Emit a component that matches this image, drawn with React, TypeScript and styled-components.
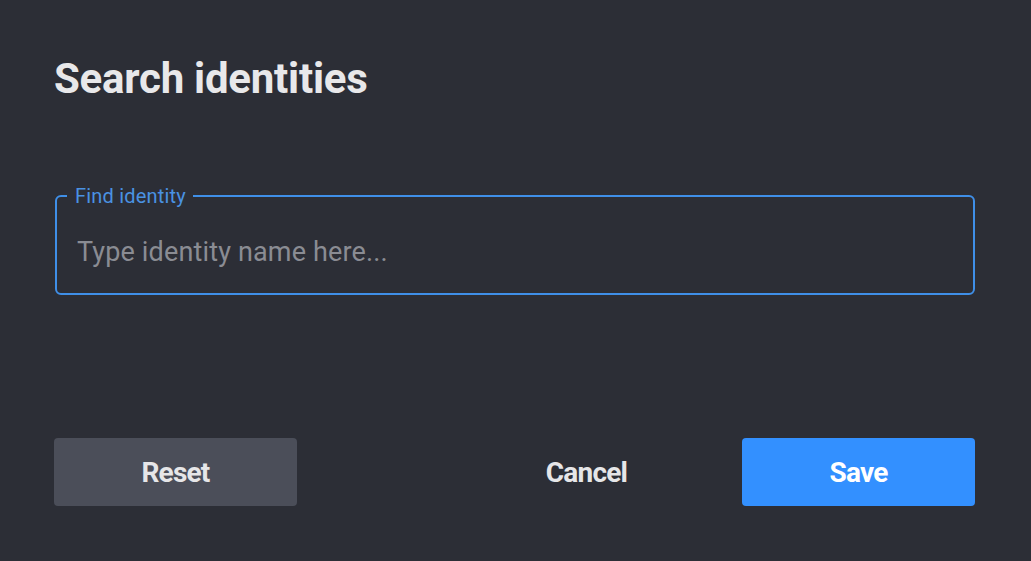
import React from "react";
import styled, { createGlobalStyle } from "styled-components";

const GlobalStyle = createGlobalStyle`
  html, body {
    margin: 0;
    padding: 0;
    background: #2c2e36;
  }
  body {
    font-family: Roboto, "Noto Sans", Arial, sans-serif;
  }
`;

export const Dialog = styled.div`
  box-sizing: border-box;
  width: 1031px;
  height: 561px;
  padding: 54px 56px 0 54px;
  display: flex;
  flex-direction: column;
  background: #2c2e36;
`;

export const Title = styled.h1`
  margin: 0;
  font-size: 42px;
  line-height: 50px;
  font-weight: 700;
  color: #e8e8ea;
  letter-spacing: -0.25px;
`;

export const Field = styled.fieldset`
  box-sizing: border-box;
  margin: 81px 0 0 1px;
  padding: 0 0 18px 10px;
  border: 2px solid #3f8fe8;
  border-radius: 6px;
`;

export const Legend = styled.legend`
  margin: 0;
  padding: 0 7px 0 8px;
  font-size: 20px;
  line-height: 22px;
  letter-spacing: 0.2px;
  color: #4a92e2;
`;

export const Input = styled.input`
  display: block;
  box-sizing: border-box;
  width: calc(100% - 20px);
  height: 46px;
  margin: 22px 0 0 10px;
  background: transparent;
  border: none;
  outline: none;
  font-family: inherit;
  font-size: 27px;
  letter-spacing: 0.15px;
  color: #e8e8ea;
  caret-color: #3d8de6;
  padding: 0;

  &::placeholder {
    color: #8a8c93;
  }
`;

export const Actions = styled.div`
  margin-top: 143px;
  display: flex;
  align-items: center;
`;

export const Button = styled.button<{ $variant: "muted" | "ghost" | "primary" }>`
  height: 68px;
  width: ${(p) => (p.$variant === "muted" ? "243px" : "233px")};
  border: none;
  border-radius: 4px;
  font-family: inherit;
  font-size: 28px;
  font-weight: 700;
  letter-spacing: -0.8px;
  cursor: pointer;
  color: ${(p) => (p.$variant === "primary" ? "#ffffff" : "#e6e6e8")};
  background: ${(p) =>
    p.$variant === "muted"
      ? "#4b4e59"
      : p.$variant === "primary"
      ? "#3390ff"
      : "transparent"};
`;

export const Spacer = styled.div`
  flex: 1;
`;

export const RightGroup = styled.div`
  display: flex;
  gap: 39px;
`;

export default function App() {
  return (
    <>
      <GlobalStyle />
      <Dialog>
        <Title>Search identities</Title>
        <Field>
          <Legend>Find identity</Legend>
          <Input autoFocus placeholder="Type identity name here..." />
        </Field>
        <Actions>
          <Button $variant="muted">Reset</Button>
          <Spacer />
          <RightGroup>
            <Button $variant="ghost">Cancel</Button>
            <Button $variant="primary">Save</Button>
          </RightGroup>
        </Actions>
      </Dialog>
    </>
  );
}
